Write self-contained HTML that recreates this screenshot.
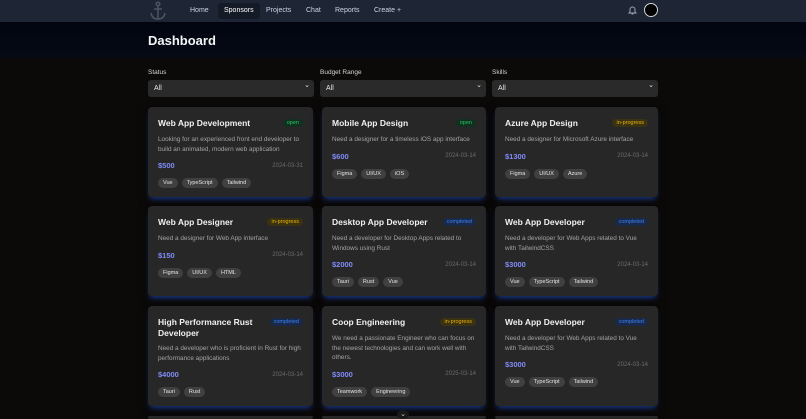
<!DOCTYPE html>
<html><head><meta charset="utf-8"><style>
*{box-sizing:border-box;margin:0;padding:0}
html{width:806px;height:419px;overflow:hidden}
body{width:806px;height:419px;overflow:hidden;background:#0c0a09;font-family:"Liberation Sans",sans-serif;color:#e5e5e5;position:relative}
.nav{position:absolute;left:0;top:0;width:806px;height:22px;background:#1e2636}
.nav a{position:absolute;top:3px;height:16px;line-height:16px;font-size:7px;color:#cbd5e1;padding:0 6px;border-radius:3px}
.hdr{position:absolute;left:0;top:22px;width:806px;height:36px;background:linear-gradient(#020510,#060a14)}
h1{position:absolute;left:148px;top:33px;font-size:13px;font-weight:bold;color:#f5f5f5}
.lbl{position:absolute;top:69px;font-size:6.5px;color:#d4d4d4}
.sel{position:absolute;top:80px;height:17px;background:#2a2a2a;border-radius:3px;font-size:7px;line-height:17px;padding-left:6px;color:#e5e5e5}
.sel:after{content:"⌄";position:absolute;right:4px;top:-3px;font-size:7px}
.card{position:absolute;background:#272727;border-radius:4px;padding:10px 10px;box-shadow:0 4px 6px -2px #1d3a8a,0 2px 10px rgba(0,0,0,.6)}
.t{font-size:8.5px;font-weight:bold;color:#f0f0f0;line-height:11px;margin-top:1px;width:105px}
.b{position:absolute;right:10px;top:12px;font-size:5.5px;padding:1px 4px;border-radius:4px}
.open{background:#12301f;color:#22c55e}
.prog{background:#3a3210;color:#eab308}
.done{background:#18294a;color:#3b82f6}
.d{font-size:6.4px;color:#a3a3a3;line-height:9.5px;margin-top:6px}
.p{display:flex;justify-content:space-between;align-items:center;margin-top:7px}
.p b{font-size:7.5px;color:#818cf8}
.p span{font-size:6px;color:#6b6b6b}
.tags{margin-top:8px;display:flex;gap:4px}
.tags span{font-size:5.5px;background:#404040;color:#e5e5e5;border-radius:5px;padding:2px 5px}
</style></head><body>
<div class="nav">
<svg style="position:absolute;left:148px;top:1px" width="20" height="20" viewBox="0 0 20 20" fill="none" stroke="#4b5563" stroke-width="1.5"><circle cx="10" cy="3" r="1.8"/><path d="M10 5v13M6 8h8M3 12q1 6 7 6q6 0 7-6"/></svg>
<a style="left:184px">Home</a>
<a style="left:218px;background:#141a26;color:#fff">Sponsors</a>
<a style="left:260px">Projects</a>
<a style="left:300px">Chat</a>
<a style="left:329px">Reports</a>
<a style="left:368px">Create +</a>
<svg style="position:absolute;left:628px;top:5px" width="9" height="10" viewBox="0 0 9 10" fill="none" stroke="#9ca3af" stroke-width="1"><path d="M2 7V4.5a2.5 2.5 0 015 0V7l1 1H1zM3.5 9h2"/></svg>
<div style="position:absolute;left:644px;top:3px;width:14px;height:14px;border-radius:50%;background:#000;border:1px solid #d4d4d4"></div>
</div>
<div class="hdr"></div>
<h1>Dashboard</h1>
<div class="lbl" style="left:148px">Status</div>
<div class="lbl" style="left:320px">Budget Range</div>
<div class="lbl" style="left:492px">Skills</div>
<div class="sel" style="left:148px;width:166px">All</div>
<div class="sel" style="left:320px;width:166px">All</div>
<div class="sel" style="left:492px;width:166px">All</div>

<div class="card" style="left:148px;top:107px;width:165px;height:90px"><div class="t">Web App Development</div><span class="b open">open</span><div class="d">Looking for an experienced front end developer to build an animated, modern web application</div><div class="p"><b>$500</b><span>2024-03-31</span></div><div class="tags"><span>Vue</span><span>TypeScript</span><span>Tailwind</span></div></div>
<div class="card" style="left:322px;top:107px;width:164px;height:90px"><div class="t">Mobile App Design</div><span class="b open">open</span><div class="d">Need a designer for a timeless iOS app interface</div><div class="p"><b>$600</b><span>2024-03-14</span></div><div class="tags"><span>Figma</span><span>UI/UX</span><span>iOS</span></div></div>
<div class="card" style="left:495px;top:107px;width:163px;height:90px"><div class="t">Azure App Design</div><span class="b prog">in-progress</span><div class="d">Need a designer for Microsoft Azure interface</div><div class="p"><b>$1300</b><span>2024-03-14</span></div><div class="tags"><span>Figma</span><span>UI/UX</span><span>Azure</span></div></div>

<div class="card" style="left:148px;top:206px;width:165px;height:90px"><div class="t">Web App Designer</div><span class="b prog">in-progress</span><div class="d">Need a designer for Web App interface</div><div class="p"><b>$150</b><span>2024-03-14</span></div><div class="tags"><span>Figma</span><span>UI/UX</span><span>HTML</span></div></div>
<div class="card" style="left:322px;top:206px;width:164px;height:90px"><div class="t" style="width:120px">Desktop App Developer</div><span class="b done">completed</span><div class="d">Need a developer for Desktop Apps related to Windows using Rust</div><div class="p"><b>$2000</b><span>2024-03-14</span></div><div class="tags"><span>Tauri</span><span>Rust</span><span>Vue</span></div></div>
<div class="card" style="left:495px;top:206px;width:163px;height:90px"><div class="t">Web App Developer</div><span class="b done">completed</span><div class="d">Need a developer for Web Apps related to Vue with TailwindCSS</div><div class="p"><b>$3000</b><span>2024-03-14</span></div><div class="tags"><span>Vue</span><span>TypeScript</span><span>Tailwind</span></div></div>

<div class="card" style="left:148px;top:306px;width:165px;height:100px"><div class="t">High Performance Rust Developer</div><span class="b done">completed</span><div class="d" style="margin-top:5px">Need a developer who is proficient in Rust for high performance applications</div><div class="p"><b>$4000</b><span>2024-03-14</span></div><div class="tags"><span>Tauri</span><span>Rust</span></div></div>
<div class="card" style="left:322px;top:306px;width:164px;height:100px"><div class="t">Coop Engineering</div><span class="b prog">in-progress</span><div class="d">We need a passionate Engineer who can focus on the newest technologies and can work well with others.</div><div class="p"><b>$3000</b><span>2025-03-14</span></div><div class="tags"><span>Teamwork</span><span>Engineering</span></div></div>
<div class="card" style="left:495px;top:306px;width:163px;height:100px"><div class="t">Web App Developer</div><span class="b done">completed</span><div class="d">Need a developer for Web Apps related to Vue with TailwindCSS</div><div class="p"><b>$3000</b><span>2024-03-14</span></div><div class="tags"><span>Vue</span><span>TypeScript</span><span>Tailwind</span></div></div>

<div class="card" style="left:148px;top:416px;width:165px;height:3px;padding:0"></div>
<div class="card" style="left:322px;top:416px;width:164px;height:3px;padding:0"></div>
<div class="card" style="left:495px;top:416px;width:163px;height:3px;padding:0"></div>
<div style="position:absolute;left:397px;top:410px;width:12px;height:9px;border-radius:50%;background:#1a1a1a;color:#ccc;font-size:7px;text-align:center;line-height:9px">⌄</div>
</body></html>
